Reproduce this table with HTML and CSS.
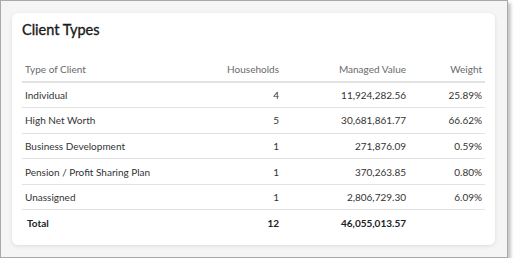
FILE: index.html
```html
<!DOCTYPE html>
<html lang="en">
<head>
<meta charset="utf-8">
<title>Client Types</title>
<link rel="stylesheet" href="styles.css">
</head>
<body>
<div class="frame">
  <section class="card">
    <h2 class="card-title">Client Types</h2>
    <table class="data-table">
      <colgroup>
        <col class="col-type">
        <col class="col-households">
        <col class="col-value">
        <col class="col-weight">
      </colgroup>
      <thead>
        <tr>
          <th class="left">Type of Client</th>
          <th class="num">Households</th>
          <th class="num">Managed Value</th>
          <th class="num">Weight</th>
        </tr>
      </thead>
      <tbody>
        <tr><td>Individual</td><td class="num">4</td><td class="num">11,924,282.56</td><td class="num">25.89%</td></tr>
        <tr><td>High Net Worth</td><td class="num">5</td><td class="num">30,681,861.77</td><td class="num">66.62%</td></tr>
        <tr><td>Business Development</td><td class="num">1</td><td class="num">271,876.09</td><td class="num">0.59%</td></tr>
        <tr><td>Pension / Profit Sharing Plan</td><td class="num">1</td><td class="num">370,263.85</td><td class="num">0.80%</td></tr>
        <tr><td>Unassigned</td><td class="num">1</td><td class="num">2,806,729.30</td><td class="num">6.09%</td></tr>
      </tbody>
      <tfoot>
        <tr class="total-row"><td class="total-label">Total</td><td class="num">12</td><td class="num">46,055,013.57</td><td class="num"></td></tr>
      </tfoot>
    </table>
  </section>
</div>
</body>
</html>
```

FILE: styles.css
```css
html, body {
  margin: 0;
  padding: 0;
  background: #ffffff;
}

body {
  font-family: "Lato", "Open Sans", "Liberation Sans", sans-serif;
  color: #333333;
}

.frame {
  box-sizing: border-box;
  width: 508px;
  height: 258px;
  border: 1px solid #a9a9a9;
  background: #f5f5f5;
  padding: 12px 12px 12px 11px;
  box-shadow: 3px 3px 3px rgba(0, 0, 0, 0.22);
}

.card {
  box-sizing: border-box;
  height: 232px;
  background: #ffffff;
  border-radius: 6px;
  box-shadow: 0 1px 4px rgba(0, 0, 0, 0.10);
  padding: 8px 10px 0 10px;
}

.card-title {
  margin: 0;
  font-size: 14.5px;
  line-height: 18px;
  font-weight: 400;
  color: #1a1a1a;
  -webkit-text-stroke: 0.35px #1a1a1a;
}

.data-table {
  margin-top: 17px;
  width: 463px;
  border-collapse: collapse;
  table-layout: fixed;
  font-size: 10px;
  line-height: 12px;
}

.col-type { width: 160px; }
.col-households { width: 100px; }
.col-value { width: 127px; }
.col-weight { width: 76px; }

.data-table th,
.data-table td {
  height: 25.6px;
  box-sizing: border-box;
  padding: 0 3px;
  vertical-align: middle;
  white-space: nowrap;
}

.data-table th {
  font-weight: 400;
  color: #6a6a6a;
  border-bottom: 2px solid #e2e2e2;
  height: 26px;
}

.data-table tbody td {
  border-bottom: 1px solid #e2e2e2;
}

.left { text-align: left; }
.num { text-align: right; }

.total-row td {
  font-weight: 700;
  color: #222222;
}

.total-row .total-label {
  padding-left: 5px;
}
```
